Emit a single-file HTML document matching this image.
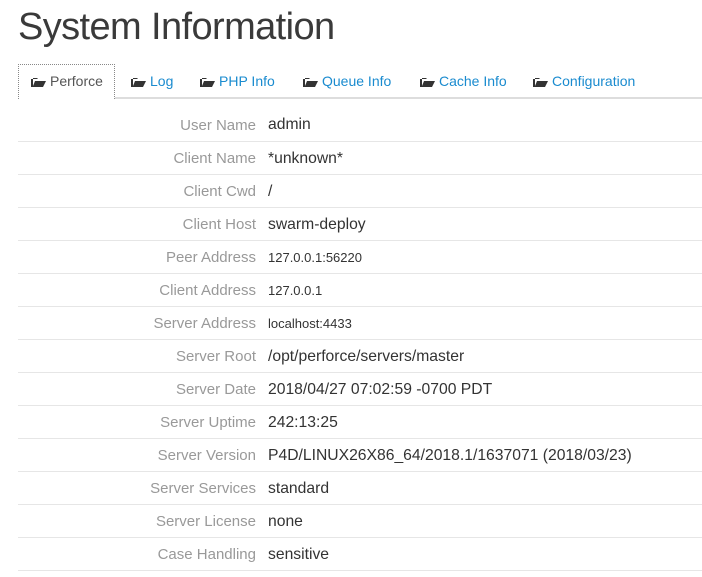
<!DOCTYPE html>
<html><head><style>
body{margin:0;background:#fff;font-family:"Liberation Sans",sans-serif;width:702px;height:577px;overflow:hidden}
h1{position:absolute;left:18px;top:6px;margin:0;font-weight:normal;font-size:38px;color:#3a3a3a;letter-spacing:-0.6px}
.tabs{position:absolute;left:18px;top:64px;width:684px;height:33px;border-bottom:2px solid #ddd}
.tab{position:absolute;top:0;height:34px;line-height:34px;font-size:14px;color:#1a8bcf}
.tab.active{border:1px dotted #888;border-bottom:none;background:#fff;color:#555;height:34px;line-height:33px}
.fi{display:inline-block;width:15px;height:10px;margin-right:4px;vertical-align:-1px}
table{position:absolute;left:18px;top:108px;width:684px;border-collapse:collapse;font-size:15px}
td{height:32px;border-bottom:1px solid #e6e6e6;padding:0;padding-top:2px;box-sizing:border-box}
tr{height:33px}
td.l{width:250px;text-align:right;color:#999;padding-right:12px}
td.v{color:#333;font-size:15.7px}
</style></head><body>
<h1>System Information</h1>
<div class="tabs">
<div class="tab active" style="left:0;width:95px"><span style="padding-left:12px"><svg class="fi" viewBox="0 0 15 10"><path d="M0 2V10H12L15 4H4L2 9V1H6L7 2Z" fill="#333"/></svg>Perforce</span></div>
<div class="tab" style="left:113px"><svg class="fi" viewBox="0 0 15 10"><path d="M0 2V10H12L15 4H4L2 9V1H6L7 2Z" fill="#333"/></svg>Log</div>
<div class="tab" style="left:182px"><svg class="fi" viewBox="0 0 15 10"><path d="M0 2V10H12L15 4H4L2 9V1H6L7 2Z" fill="#333"/></svg>PHP Info</div>
<div class="tab" style="left:285px"><svg class="fi" viewBox="0 0 15 10"><path d="M0 2V10H12L15 4H4L2 9V1H6L7 2Z" fill="#333"/></svg>Queue Info</div>
<div class="tab" style="left:402px"><svg class="fi" viewBox="0 0 15 10"><path d="M0 2V10H12L15 4H4L2 9V1H6L7 2Z" fill="#333"/></svg>Cache Info</div>
<div class="tab" style="left:515px"><svg class="fi" viewBox="0 0 15 10"><path d="M0 2V10H12L15 4H4L2 9V1H6L7 2Z" fill="#333"/></svg>Configuration</div>
</div>
<table>
<tr><td class="l">User Name</td><td class="v">admin</td></tr>
<tr><td class="l">Client Name</td><td class="v">*unknown*</td></tr>
<tr><td class="l">Client Cwd</td><td class="v">/</td></tr>
<tr><td class="l">Client Host</td><td class="v">swarm-deploy</td></tr>
<tr><td class="l">Peer Address</td><td class="v" style="font-size:13px">127.0.0.1:56220</td></tr>
<tr><td class="l">Client Address</td><td class="v" style="font-size:13px">127.0.0.1</td></tr>
<tr><td class="l">Server Address</td><td class="v" style="font-size:13px">localhost:4433</td></tr>
<tr><td class="l">Server Root</td><td class="v">/opt/perforce/servers/master</td></tr>
<tr><td class="l">Server Date</td><td class="v">2018/04/27 07:02:59 -0700 PDT</td></tr>
<tr><td class="l">Server Uptime</td><td class="v">242:13:25</td></tr>
<tr><td class="l">Server Version</td><td class="v">P4D/LINUX26X86_64/2018.1/1637071 (2018/03/23)</td></tr>
<tr><td class="l">Server Services</td><td class="v">standard</td></tr>
<tr><td class="l">Server License</td><td class="v">none</td></tr>
<tr><td class="l">Case Handling</td><td class="v">sensitive</td></tr>
</table>
</body></html>
